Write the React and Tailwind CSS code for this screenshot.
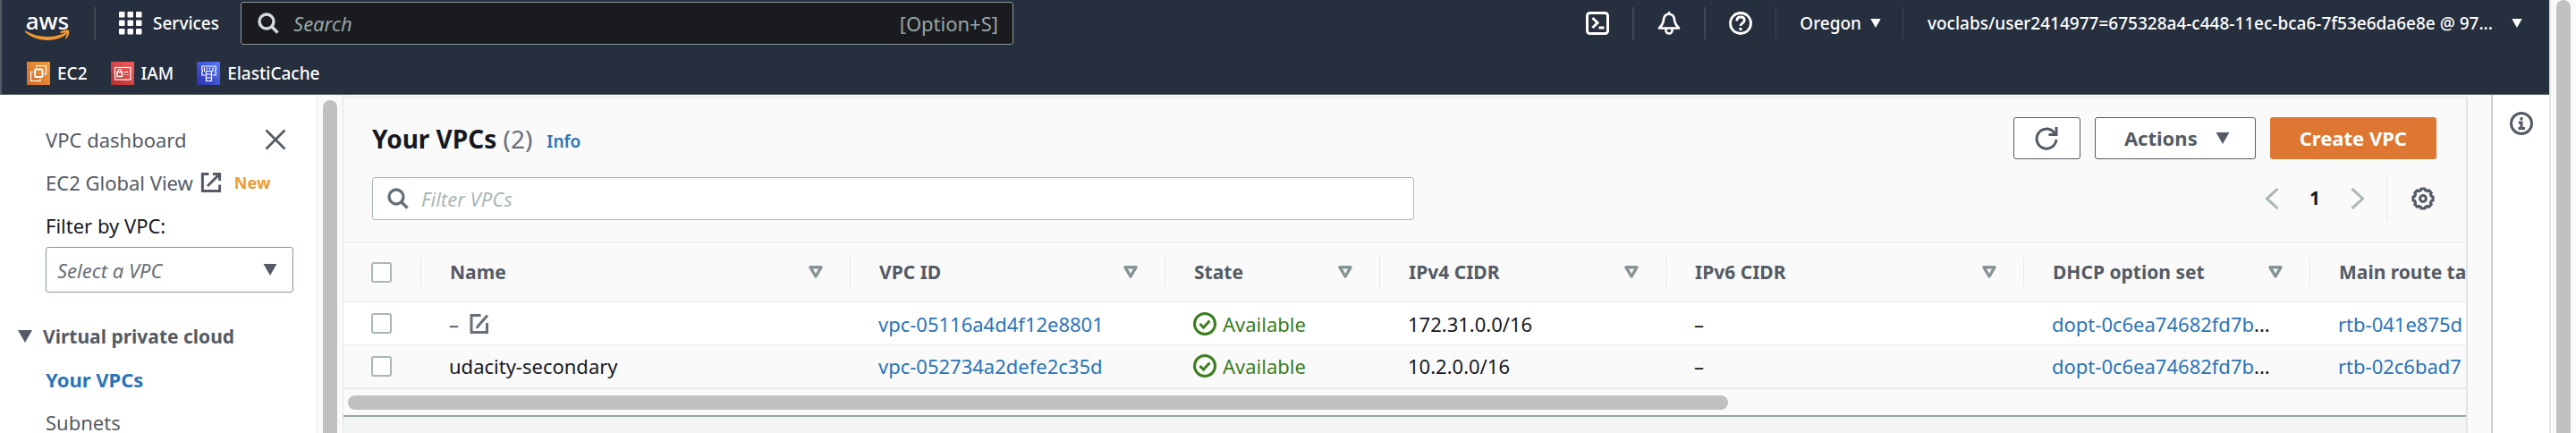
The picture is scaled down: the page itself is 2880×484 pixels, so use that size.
import React from "react";

const caretPath = "M0 0h16l-8 14z";

function Caret({ className }) {
  return (
    <svg viewBox="0 0 16 14" className={className} fill="currentColor" aria-hidden="true">
      <path d={caretPath} />
    </svg>
  );
}

function SearchIcon({ className }) {
  return (
    <svg viewBox="0 0 24 24" className={className} fill="none" stroke="currentColor" strokeWidth="3.4" aria-hidden="true">
      <circle cx="10" cy="10" r="8" />
      <path d="M15.500 15.500l7 7" />
    </svg>
  );
}

// Eight rounded teeth around a ring.
const gearPath =
  "M" +
  Array.from({ length: 8 }, (_, i) =>
    [[-11, 11.3], [11, 11.3], [15, 9.6], [30, 9.6]].map(([offset, r]) => {
      const a = ((i * 45 + offset) * Math.PI) / 180;
      return (13 + r * Math.sin(a)).toFixed(2) + " " + (13 - r * Math.cos(a)).toFixed(2);
    }).join("L")
  ).join("L") +
  "Z";

function AwsLogo() {
  return (
    <a href="#home" aria-label="AWS" className="flex w-[50px] flex-col items-center text-white">
      <span className="text-[26px] leading-8 font-medium">aws</span>
      <svg viewBox="0 0 50 13" className="-mt-1.5 h-[13px] w-[50px] shrink-0" fill="#f0982f" aria-hidden="true">
        <path d="M.5 1.500C14 9.500 31 10 45 3.800c1.500-.6 2.300.8 1 1.800C35 14.500 13 14.500.3 3c-.9-.9-.6-2 .2-1.500z" />
        <path d="M39.500 2.500c3.500-2.500 9-2.300 9.700-1.200.7 1.200-.3 6.700-3.500 9.300-.6.5-1.100.2-.8-.4.7-1.700 2.200-5.200 1.600-6-.7-.9-4.400-.5-6.500-.2-.8.100-1.200-.9-.5-1.500z" />
      </svg>
    </a>
  );
}

function GridIcon() {
  return (
    <svg viewBox="0 0 26 26" className="size-[26px]" fill="currentColor" aria-hidden="true">
      {[0, 9.5, 19].map((y) => [0, 9.5, 19].map((x) => <rect key={x + "-" + y} x={x} y={y} width="6.500" height="6.500" rx="1" />))}
    </svg>
  );
}

function Ec2Tile() {
  return (
    <svg viewBox="0 0 26 26" className="size-[26px]" aria-hidden="true">
      <defs>
        <linearGradient id="ec2" x1="0" y1="1" x2="1" y2="0"><stop stopColor="#cf6b30" /><stop offset="1" stopColor="#f39d38" /></linearGradient>
      </defs>
      <rect width="26" height="26" fill="url(#ec2)" />
      <g fill="none" stroke="#fff" strokeWidth="1.200">
        <rect x="9" y="8.500" width="8.500" height="8.500" rx="1" strokeWidth="1.800" />
        <path d="M11 6.500v-2h10.500v9.500h-2.500M7 11.500H4.500v10H15v-2.500" />
      </g>
    </svg>
  );
}

function IamTile() {
  return (
    <svg viewBox="0 0 26 26" className="size-[26px]" aria-hidden="true">
      <defs>
        <linearGradient id="iam" x1="0" y1="1" x2="1" y2="0"><stop stopColor="#b52a2c" /><stop offset="1" stopColor="#f2625e" /></linearGradient>
      </defs>
      <rect width="26" height="26" fill="url(#iam)" />
      <g fill="none" stroke="#fff" strokeWidth="1.200">
        <rect x="4.500" y="6.500" width="17.500" height="13.500" />
        <rect x="7" y="11.500" width="5.500" height="5" strokeWidth="1.500" />
        <path d="M8 11.500V10a1.700 1.700 0 0 1 3.500 0v1.500M15 11.500h4.500M15 14.500h1.500M18 14.500h1.500" />
      </g>
    </svg>
  );
}

function CacheTile() {
  return (
    <svg viewBox="0 0 26 26" className="size-[26px]" aria-hidden="true">
      <defs>
        <linearGradient id="cache" x1="0" y1="1" x2="1" y2="0"><stop stopColor="#2f2fae" /><stop offset="1" stopColor="#547bf5" /></linearGradient>
      </defs>
      <rect width="26" height="26" fill="url(#cache)" />
      <g fill="none" stroke="#fff" strokeWidth="1.200">
        <path d="M9.500 15H5.800v-3.500c1-.5 1-2 0-2.500V5h15.500v4c-1 .5-1 2 0 2.500V15h-3.500M8.500 11V6.500M11.500 8.500v-2M14.500 8.500v-2M18 11V6.500" />
        <path d="M10.500 10.500h6v11h-6zM10.500 14h6M10.500 18h6" />
      </g>
    </svg>
  );
}

function Favorite({ icon, children }) {
  return (
    <a href="#favorite" className="flex items-center gap-2 text-white">
      {icon}
      {children}
    </a>
  );
}

function TopBar() {
  return (
    <header className="shrink-0 border-b border-l-2 border-[#545b64] bg-[#262f3e] text-[19px] leading-6 font-medium text-white">
      <div className="flex h-[52px] items-center">
        <div className="flex items-center pl-[26px]">
          <AwsLogo />
          <span className="ml-[27px] h-9 w-0.5 bg-[#3f4753]" />
          <button type="button" className="ml-[26px] flex items-center gap-3">
            <GridIcon />
            Services
          </button>
        </div>
        <div className="ml-6 flex h-12 w-[864px] items-center rounded-[3px] border border-[#8d9999] bg-[#1a1b1f] px-4 text-[22px]">
          <SearchIcon className="mr-4 ml-0.5 size-6 text-[#d5dbdb]" />
          <input type="search" aria-label="Search services" placeholder="Search" className="h-9 min-w-0 flex-1 bg-transparent font-normal outline-none placeholder:text-[#95a5a6] placeholder:italic" />
          <span className="font-normal text-[#95a5a6]">[Option+S]</span>
        </div>
        <div className="ml-auto flex items-center">
          <button type="button" aria-label="CloudShell">
            <svg viewBox="0 0 26 26" className="size-[26px]" fill="none" stroke="currentColor" strokeWidth="3" aria-hidden="true">
              <rect x="1.500" y="1.500" width="23" height="23" rx="3" />
              <path d="M7.500 7l5.500 5.500-5.500 5.500M14.500 18h6" />
            </svg>
          </button>
          <span className="mx-[26px] h-9 w-0.5 bg-[#3f4753]" />
          <button type="button" aria-label="Notifications">
            <svg viewBox="0 0 26 26" className="size-[26px]" fill="none" stroke="currentColor" strokeWidth="2.600" strokeLinejoin="round" aria-hidden="true">
              <path d="M13 0v3M2 18.500c3-3 4.500-5.500 5-9.500C7.500 5 9.500 2.800 13 2.800S18.500 5 19 9c.5 4 2 6.500 5 9.500zM9.500 18.500v2.500a3.500 3.500 0 0 0 7 0v-2.500" />
            </svg>
          </button>
          <span className="mx-[26px] h-9 w-0.5 bg-[#3f4753]" />
          <button type="button" aria-label="Help">
            <svg viewBox="0 0 26 26" className="size-[26px]" fill="none" stroke="currentColor" strokeWidth="2.800" aria-hidden="true">
              <circle cx="13" cy="13" r="11.500" />
              <path d="M8.800 10.500C8.800 7.500 10.500 6 13 6s4.300 1.500 4.300 3.800c0 3-4.300 3.200-4.300 6.200" />
              <path d="M13 18v3" strokeWidth="3" />
            </svg>
          </button>
          <span className="ml-[26px] h-9 w-px bg-[#3f4753]" />
          <button type="button" className="flex items-center gap-2.5 pr-6 pl-[26px]">
            Oregon
            <Caret className="h-2.5 w-3" />
          </button>
          <span className="h-9 w-px bg-[#3f4753]" />
          <button type="button" className="flex items-center gap-[11px] pr-[30px] pl-[27px] text-left">
            <span className="w-[642px]">voclabs/user2414977=675328a4-c448-11ec-bca6-7f53e6da6e8e @ 97...</span>
            <Caret className="h-2.5 w-3" />
          </button>
        </div>
      </div>
      <nav className="flex h-[53px] items-center gap-[26px] pt-1.5 pl-7" aria-label="Favorites">
        <Favorite icon={<Ec2Tile />}>EC2</Favorite>
        <Favorite icon={<IamTile />}>IAM</Favorite>
        <Favorite icon={<CacheTile />}>ElastiCache</Favorite>
      </nav>
    </header>
  );
}

function Sidebar() {
  return (
    <aside className="flex w-[384px] shrink-0 overflow-hidden bg-white">
      <nav className="flex-1 pt-[34px] pr-[26px] pl-[51px] text-[22px] leading-8 text-[#545b64]" aria-label="VPC">
        <div className="flex items-center justify-between pr-2">
          <a href="#dashboard">VPC dashboard</a>
          <button type="button" aria-label="Close navigation">
            <svg viewBox="0 0 24 24" className="size-6" fill="none" stroke="currentColor" strokeWidth="2.800" aria-hidden="true">
              <path d="M1.500 1.500l21 21M22.500 1.500l-21 21" />
            </svg>
          </button>
        </div>
        <a href="#global" className="mt-4 flex items-center">
          EC2 Global View
          <svg viewBox="0 0 24 24" className="ml-2 size-6" fill="none" stroke="currentColor" strokeWidth="3" aria-hidden="true">
            <path d="M9.500 2.400H2.400v19.200h19.200v-7M14 2.400h7.600V10M21 3L8 16" />
          </svg>
          <span className="ml-3.5 text-[18px] font-bold text-[#ec9a35]">New</span>
        </a>
        <label htmlFor="vpc-filter" className="mt-4 block text-[#16191f]">Filter by VPC:</label>
        <div className="relative mt-2">
          <select id="vpc-filter" defaultValue="" className="h-[51px] w-full appearance-none rounded-[3px] border border-[#879596] bg-white px-3 text-[#687078] italic">
            <option value="">Select a VPC</option>
          </select>
          <Caret className="pointer-events-none absolute top-[19px] right-[18px] h-[13px] w-4" />
        </div>
        <button type="button" className="mt-[33px] -ml-[31px] flex items-center gap-3 text-[21px] font-bold">
          <Caret className="h-3.5 w-4" />
          Virtual private cloud
        </button>
        <a href="#vpcs" className="mt-4 block font-bold text-[#2b74b8]">Your VPCs</a>
        <a href="#subnets" className="mt-4 block">Subnets</a>
      </nav>
      <div className="flex w-[30px] justify-center border-r border-l border-[#e4e4e4] bg-[#fafafa] pt-1.5">
        <div className="h-[500px] w-4 rounded-full bg-[#c1c1c1]" />
      </div>
    </aside>
  );
}

const columns = [
  { label: "Name", width: "w-[480px]" },
  { label: "VPC ID", width: "w-[352px]" },
  { label: "State", width: "w-[240px]" },
  { label: "IPv4 CIDR", width: "w-[320px]" },
  { label: "IPv6 CIDR", width: "w-[400px]" },
  { label: "DHCP option set", width: "w-[320px]" },
  { label: "Main route table", width: "w-[320px]" },
];

const vpcs = [
  { name: "", id: "vpc-05116a4d4f12e8801", cidr: "172.31.0.0/16", dhcp: "dopt-0c6ea74682fd7b", route: "rtb-041e875d" },
  { name: "udacity-secondary", id: "vpc-052734a2defe2c35d", cidr: "10.2.0.0/16", dhcp: "dopt-0c6ea74682fd7b", route: "rtb-02c6bad7" },
];

function Check({ label }) {
  return <input type="checkbox" aria-label={label} className="block size-[23px] appearance-none rounded-[3px] border-2 border-[#aab7b8] bg-white" />;
}

function VpcTable() {
  return (
    <table className="w-[2518px] table-fixed border-collapse text-[22px] leading-8 text-[#16191f]">
      <thead>
        <tr className="h-[67px] border-y border-[#e7e9e9] text-left text-[21px] text-[#545b64]">
          <th className="w-[86px] p-0 pl-[31px]"><Check label="Select all VPCs" /></th>
          {columns.map((c) => (
            <th key={c.label} className={c.width + " p-0 font-bold"}>
              <div className="flex h-[34px] items-center justify-between border-l border-[#e7e9e9] pr-[30px] pl-8 whitespace-nowrap">
                {c.label}
                <svg viewBox="0 0 16 14" className="h-3.5 w-4" fill="none" stroke="#879596" strokeWidth="3.400" strokeLinejoin="round" aria-hidden="true">
                  <path d="M2 1.800h12L8 12z" />
                </svg>
              </div>
            </th>
          ))}
        </tr>
      </thead>
      <tbody>
        {vpcs.map((v) => (
          <tr key={v.id} className="h-12 border-b border-[#e7e9e9] bg-white last:border-b-2 even:bg-[#fafafa]">
            <td className="p-0 pl-[31px]"><Check label={"Select " + v.id} /></td>
            <td className="p-0 pl-8">
              {v.name || (
                <span className="flex items-center gap-3 text-[#545b64]">
                  –
                  <button type="button" aria-label="Edit name">
                    <svg viewBox="0 0 22 24" className="h-6 w-[22px]" fill="none" stroke="#687078" strokeWidth="3" aria-hidden="true">
                      <path d="M12.500 2.500H2v19h17.500V11M20 2.500L9 15" />
                      <path d="M7 17.500l.8-4 3 2.800z" fill="#687078" stroke="none" />
                    </svg>
                  </button>
                </span>
              )}
            </td>
            <td className="p-0 pl-8"><a href="#vpc" className="text-[#2b74b8]">{v.id}</a></td>
            <td className="p-0 pl-8">
              <span className="flex items-center gap-[7px] text-[#3b7d1e]">
                <svg viewBox="0 0 26 26" className="size-[26px]" fill="none" stroke="currentColor" strokeWidth="3" aria-hidden="true">
                  <circle cx="13" cy="13" r="11.500" />
                  <path d="M7.500 13l4 4 7-7.500" />
                </svg>
                Available
              </span>
            </td>
            <td className="p-0 pl-8">{v.cidr}</td>
            <td className="p-0 pl-8">–</td>
            <td className="p-0 pl-8"><a href="#dhcp" className="text-[#2b74b8]">{v.dhcp}</a>...</td>
            <td className="p-0 pl-8"><a href="#route" className="text-[#2b74b8]">{v.route}</a></td>
          </tr>
        ))}
      </tbody>
    </table>
  );
}

function Main() {
  return (
    <main className="flex min-w-0 flex-1 flex-col bg-[#fafafa] pt-0.5 pr-[26px]">
      <section className="flex min-w-0 flex-1 flex-col border-t border-r-2 border-[#e4e4e4] bg-[#f2f3f3]">
        <div className="flex items-center bg-[#fafafa] pt-[22px] pr-[33px] pl-8">
          <h1 className="text-[28px] leading-9 font-bold text-[#16191f]">
            Your VPCs <span className="font-normal text-[#687078]">(2)</span>
          </h1>
          <a href="#info" className="mt-1.5 ml-4 text-[19px] leading-6 font-semibold text-[#2b74b8]">Info</a>
          <div className="ml-auto flex gap-4 text-[22px] font-bold text-[#545b64]">
            <button type="button" aria-label="Refresh" className="flex h-[47px] w-[75px] items-center justify-center rounded-[3px] border border-[#545b64] bg-white">
              <svg viewBox="0 0 26 26" className="size-[26px]" fill="none" stroke="currentColor" strokeWidth="3" aria-hidden="true">
                <path d="M24 14a11 11 0 1 1-3-8.500l3 3" />
                <path d="M24 0v8.500h-8.500" />
              </svg>
            </button>
            <button type="button" className="flex h-[47px] items-center gap-5 rounded-[3px] border border-[#545b64] bg-white pr-7 pl-8">
              Actions
              <Caret className="h-[13px] w-4" />
            </button>
            <button type="button" className="h-[47px] rounded-[3px] bg-[#de7732] px-[33px] text-white">Create VPC</button>
          </div>
        </div>
        <div className="flex items-center bg-[#fafafa] pt-5 pr-[35px] pb-6 pl-8">
          <div className="flex h-12 w-[1165px] items-center rounded-[3px] border border-[#aab7b8] bg-white px-4 text-[22px]">
            <SearchIcon className="mr-3.5 size-6 text-[#687078]" />
            <input type="search" aria-label="Filter VPCs" placeholder="Filter VPCs" className="h-9 min-w-0 flex-1 bg-transparent outline-none placeholder:text-[#aab7b8] placeholder:italic" />
          </div>
          <div className="ml-auto flex items-center">
            <button type="button" aria-label="Previous page" className="text-[#aab7b8]">
              <svg viewBox="0 0 16 24" className="h-6 w-4" fill="none" stroke="currentColor" strokeWidth="3" aria-hidden="true"><path d="M14.500 1L2.500 12l12 11" /></svg>
            </button>
            <span className="w-20 text-center text-[21px] font-bold text-[#16191f]">1</span>
            <button type="button" aria-label="Next page" className="text-[#aab7b8]">
              <svg viewBox="0 0 16 24" className="h-6 w-4" fill="none" stroke="currentColor" strokeWidth="3" aria-hidden="true"><path d="M1.500 1l12 11-12 11" /></svg>
            </button>
            <span className="mr-[27px] ml-6 h-12 w-px bg-[#e7e9e9]" />
            <button type="button" aria-label="Preferences" className="text-[#545b64]">
              <svg viewBox="0 0 26 26" className="size-[26px]" fill="none" stroke="currentColor" strokeWidth="3" strokeLinejoin="round" aria-hidden="true">
                <path d={gearPath} />
                <circle cx="13" cy="13" r="3.400" />
              </svg>
            </button>
          </div>
        </div>
        <div className="overflow-hidden bg-[#fafafa]">
          <VpcTable />
        </div>
        <div className="border-b-2 border-[#9aa5a6] bg-[#fafafa] px-[5px] pt-[7px] pb-1.5">
          <div className="h-4 w-[65.3%] rounded-full bg-[#c1c1c1]" />
        </div>
      </section>
    </main>
  );
}

export default function App() {
  return (
    <div className="flex h-screen overflow-hidden bg-white font-['Noto_Sans',sans-serif]">
      <div className="flex min-w-0 flex-1 flex-col">
        <TopBar />
        <div className="flex min-h-0 flex-1">
          <Sidebar />
          <Main />
          <aside className="flex w-[65px] shrink-0 justify-center border-l-2 border-[#cdd0d1] bg-white pt-[19px]">
            <button type="button" aria-label="Open info panel" className="h-[26px] text-[#545b64]">
              <svg viewBox="0 0 26 26" className="size-[26px]" fill="none" stroke="currentColor" strokeWidth="3" aria-hidden="true">
                <circle cx="13" cy="13" r="11.500" />
                <path d="M13 6v3.500M9.800 12H13v6M9.500 18.500h7.500" />
              </svg>
            </button>
          </aside>
        </div>
      </div>
      <div className="flex w-[30px] shrink-0 justify-center border-l-2 border-[#e4e4e4] bg-[#fafafa]">
        <div className="h-[520px] w-4 rounded-t-full bg-[#c1c1c1]" />
      </div>
    </div>
  );
}
